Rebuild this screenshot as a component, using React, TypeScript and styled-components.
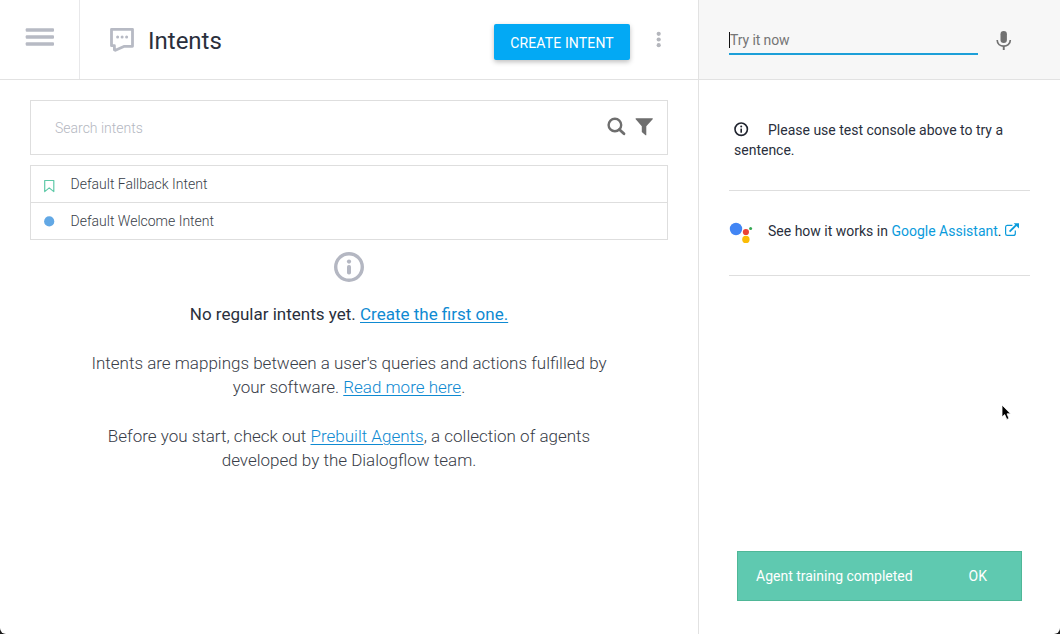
import React from 'react';
import styled, { createGlobalStyle } from 'styled-components';

const Global = createGlobalStyle`
  * { box-sizing: border-box; }
  html, body { margin: 0; background: #1b1b1b; }
  body { font-family: Roboto, "Liberation Sans", sans-serif; color: #2b303b; }
  p { margin: 0; }
  svg { display: block; flex: none; }
`;

const Window = styled.div`
  display: flex;
  position: relative;
  width: 1060px;
  height: 634px;
  overflow: hidden;
  background: #fff;
  border-radius: 0 0 6px 6px;
`;

const Main = styled.main`
  width: 699px;
  display: flex;
  flex-direction: column;
  border-right: 1px solid #e2e2e2;
`;

const Header = styled.header`
  height: 80px;
  flex: none;
  display: flex;
  border-bottom: 1px solid #e2e2e2;
`;

const MenuButton = styled.button`
  width: 80px;
  height: 79px;
  display: flex;
  align-items: flex-start;
  padding: 28px 0 0 25px;
  border: 0;
  border-right: 1px solid #e8e8ea;
  background: none;
`;

const TitleBar = styled.div`
  flex: 1;
  display: flex;
  align-items: center;
  padding: 0 36px 0 29px;
`;

const Title = styled.h1`
  margin: 0 auto 0 11px;
  padding-top: 2px;
  font-size: 24px;
  font-weight: 400;
  line-height: 30px;
  color: #2a2f3c;
`;

const CreateButton = styled.button`
  width: 136px;
  height: 36px;
  margin: 5px 25px 0 0;
  padding: 1px 0 0;
  border: 0;
  border-radius: 2px;
  background: #03a9f4;
  color: #fff;
  font: 400 14px/36px Roboto, sans-serif;
  letter-spacing: 0.15px;
  white-space: nowrap;
  box-shadow: 0 2px 5px rgba(0, 0, 0, 0.26);
`;

const Content = styled.section`
  padding: 20px 30px 0;
`;

const SearchBox = styled.div`
  height: 55px;
  display: flex;
  align-items: center;
  border: 1px solid #dedede;
  padding: 0 12px 0 24px;
  margin-bottom: 10px;
  svg { margin-bottom: 2px; }
`;

const Placeholder = styled.span`
  flex: 1;
  font-size: 14px;
  font-weight: 300;
  color: #b4b7c1;
`;

const IntentList = styled.ul`
  margin: 0;
  padding: 0;
  list-style: none;
  border: 1px solid #dedede;
`;

const IntentRow = styled.li`
  height: 36px;
  display: flex;
  align-items: center;
  padding-left: 12px;
  font-size: 14px;
  font-weight: 300;
  color: #383d48;
  & + & { height: 37px; border-top: 1px solid #dedede; }
`;

const Marker = styled.span`
  width: 27.5px;
  padding-top: 3px;
`;

const Empty = styled.div`
  display: flex;
  flex-direction: column;
  align-items: center;
  padding-top: 11px;
  text-align: center;
`;

const Lead = styled.p`
  margin-top: 19px;
  font-size: 17px;
  line-height: 24px;
  color: #2a2f3c;
`;

const Text = styled.p`
  margin-top: 25px;
  font-size: 17px;
  font-weight: 300;
  line-height: 24px;
  color: #383d48;
`;

const Link = styled.a<{ $plain?: boolean }>`
  color: ${p => (p.$plain ? '#0a9bdc' : '#0f8ad2')};
  text-decoration: ${p => (p.$plain ? 'none' : 'underline')};
  text-decoration-thickness: 1px;
  text-underline-offset: 2px;
`;

const Console = styled.aside`
  flex: 1;
  display: flex;
  flex-direction: column;
`;

const ConsoleHeader = styled.div`
  height: 80px;
  flex: none;
  display: flex;
  background: #f7f7f7;
  border-bottom: 1px solid #e2e2e2;
  padding-left: 30px;
`;

const TryField = styled.div`
  width: 249px;
  height: 55px;
  display: flex;
  align-items: flex-end;
  padding-bottom: 5px;
  border-bottom: 2px solid #1d9fd8;
  font-size: 14px;
  line-height: 16px;
  letter-spacing: -0.1px;
  color: #757575;
`;

const Caret = styled.i`
  width: 1px;
  height: 16px;
  background: #111;
`;

const MicButton = styled.span`
  padding: 28px 0 0 14px;
`;

const Notes = styled.div`
  margin: 0 30px;
  font-size: 14px;
  line-height: 20px;
  color: #2a2f3c;
`;

const Note = styled.div`
  height: 111px;
  padding: 40px 5px 0;
  border-bottom: 1px solid #dedede;
  svg { display: inline-block; margin-right: 19px; vertical-align: -2px; }
`;

const AssistantNote = styled.div`
  height: 85px;
  display: flex;
  align-items: center;
  padding-bottom: 3px;
  border-bottom: 1px solid #dedede;
`;

const AssistantText = styled.span`
  margin: 0 3px 2px 14px;
  white-space: nowrap;
`;

const OpenIcon = styled.svg`
  margin-bottom: 3px;
`;

const Toast = styled.div`
  width: 285px;
  height: 50px;
  margin: auto 0 33px 38px;
  display: flex;
  align-items: center;
  justify-content: space-between;
  padding: 0 34px 0 18px;
  border: 1px solid #4fb797;
  background: #5fc9b0;
  color: #fff;
  font-size: 14px;
`;

const Pointer = styled.svg`
  position: absolute;
  left: 1001px;
  top: 404px;
`;

export default function App() {
  return (
    <>
      <Global />
      <Window>
        <Main>
          <Header>
            <MenuButton aria-label="Menu">
              <svg width="30" height="19" fill="#b7bac4">
                <rect x="0.7" y="0.2" width="28.3" height="3.6" rx="1" />
                <rect x="0.7" y="7.2" width="28.3" height="3.6" rx="1" />
                <rect x="0.7" y="14.2" width="28.3" height="3.6" rx="1" />
              </svg>
            </MenuButton>
            <TitleBar>
              <svg width="28" height="28" viewBox="0 0 28 28" fill="none">
                <path d="M2.5 3.3H23.5V20.3H15.4L6.4 24.3L5.4 23.7V19.7H2.5Z" stroke="#b7bac4" strokeWidth="2.8" strokeLinejoin="round" />
                <g fill="#b7bac4"><circle cx="8.6" cy="11" r="1.5" /><circle cx="13.1" cy="11" r="1.5" /><circle cx="17.6" cy="11" r="1.5" /></g>
              </svg>
              <Title>Intents</Title>
              <CreateButton>CREATE INTENT</CreateButton>
              <svg width="7" height="18" fill="#b4b6bc">
                <circle cx="3.7" cy="2.8" r="2.1" /><circle cx="3.7" cy="8.5" r="2.1" /><circle cx="3.7" cy="14.2" r="2.1" />
              </svg>
            </TitleBar>
          </Header>
          <Content>
            <SearchBox>
              <Placeholder>Search intents</Placeholder>
              <svg width="48" height="20" viewBox="0 0 48 20">
                <circle cx="7.9" cy="8" r="6.3" fill="none" stroke="#6e6e6e" strokeWidth="2.4" />
                <path d="M12.4 12.4L17 16.8" stroke="#6e6e6e" strokeWidth="2.8" strokeLinecap="round" />
                <path d="M28.8 1.2H45.6L45.9 2L39.3 9.2V18.2H38.5L34.8 14.9V9.2L28.5 2Z" fill="#6e6e6e" />
              </svg>
            </SearchBox>
            <IntentList>
              <IntentRow>
                <Marker>
                  <svg width="12" height="14" fill="none">
                    <path d="M1.7 1.5H10.8V12.6L6.2 8.9L1.7 12.6Z" stroke="#5fc9a8" strokeWidth="1.2" strokeLinejoin="round" />
                  </svg>
                </Marker>
                Default Fallback Intent
              </IntentRow>
              <IntentRow>
                <Marker>
                  <svg width="12" height="14"><circle cx="6.2" cy="5.4" r="5.1" fill="#62a8e5" /></svg>
                </Marker>
                Default Welcome Intent
              </IntentRow>
            </IntentList>
            <Empty>
              <svg width="32" height="32" viewBox="0 0 32 32" fill="#b4b7c2">
                <circle cx="16" cy="16" r="13.3" fill="none" stroke="#b4b7c2" strokeWidth="3.4" />
                <circle cx="16" cy="10.6" r="2.1" />
                <rect x="14" y="14" width="4" height="9.5" rx="1.8" />
              </svg>
              <Lead>No regular intents yet. <Link>Create the first one.</Link></Lead>
              <Text>
                Intents are mappings between a user's queries and actions fulfilled by<br />
                your software. <Link>Read more here</Link>.
              </Text>
              <Text>
                Before you start, check out <Link>Prebuilt Agents</Link>, a collection of agents<br />
                developed by the Dialogflow team.
              </Text>
            </Empty>
          </Content>
        </Main>
        <Console>
          <ConsoleHeader>
            <TryField><Caret />Try it now</TryField>
            <MicButton>
              <svg width="24" height="24" viewBox="0 0 24 24" fill="#717171">
                <rect x="8.5" y="3" width="6.4" height="12" rx="3.2" />
                <path d="M5.2 12C5.2 20.2 18.3 20.2 18.3 12" fill="none" stroke="#717171" strokeWidth="1.7" />
                <rect x="10.8" y="18" width="1.9" height="4" />
              </svg>
            </MicButton>
          </ConsoleHeader>
          <Notes>
            <Note>
              <svg width="15" height="15" viewBox="0 0 15 15">
                <circle cx="7.2" cy="7.2" r="6.2" fill="none" stroke="#20242f" strokeWidth="1.6" />
                <circle cx="7.2" cy="4.4" r="1" fill="#20242f" />
                <rect x="6.4" y="6.4" width="1.6" height="4.4" rx="0.5" fill="#20242f" />
              </svg>
              Please use test console above to try a sentence.
            </Note>
            <AssistantNote>
              <svg width="25" height="24" viewBox="0 0 25 24">
                <circle cx="7" cy="9" r="6.2" fill="#4285f4" />
                <circle cx="16.9" cy="12" r="3.1" fill="#ea4335" />
                <circle cx="16.9" cy="19.4" r="3.7" fill="#fbbc05" />
                <circle cx="21.6" cy="8.4" r="1.5" fill="#34a853" />
              </svg>
              <AssistantText>See how it works in <Link $plain>Google Assistant</Link>.</AssistantText>
              <OpenIcon width="15" height="14" viewBox="0.6 0 15 14" fill="none" stroke="#0a9bdc">
                <path d="M8 2.3H2.7C1.7 2.3 1.2 3 1.2 4.2V10.4C1.2 11.8 1.7 12.4 2.9 12.4H8.9C10.2 12.4 10.9 11.7 10.9 10.4V7.5" strokeWidth="1.2" />
                <path d="M5.2 8.6L12 1.8" strokeWidth="1.9" />
                <path d="M9.3 0.3H14.6V5.6Z" fill="#0a9bdc" stroke="none" />
              </OpenIcon>
            </AssistantNote>
          </Notes>
          <Toast><span>Agent training completed</span><span>OK</span></Toast>
        </Console>
        <Pointer width="12" height="18" viewBox="0 0 12 18">
          <path d="M1 1V13L3.7 10.6L5.8 15.4L8 14.5L6 9.8H9.6Z" fill="#000" stroke="#fff" strokeWidth="0.8" />
        </Pointer>
      </Window>
    </>
  );
}
